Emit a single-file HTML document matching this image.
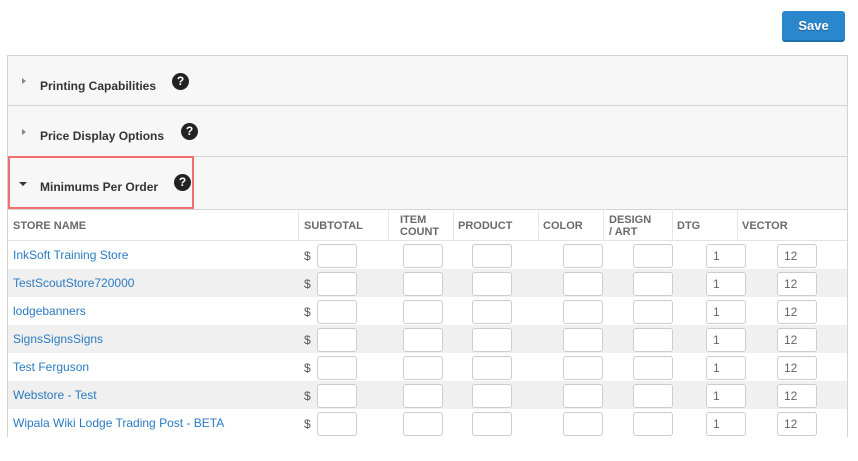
<!DOCTYPE html>
<html><head><style>
*{box-sizing:border-box;margin:0;padding:0}
body{width:858px;height:461px;background:#fff;font-family:"Liberation Sans",Arial,sans-serif;position:relative;overflow:hidden}
.abs{position:absolute}
.save{left:782px;top:11px;width:63px;height:31px;background:#2b87cc;border-radius:3px;border-bottom:2px solid #1f6faa;color:#fff;font-weight:bold;font-size:13px;text-align:center;line-height:30px;text-shadow:0 1px 1px rgba(0,0,0,.3)}
.panel{left:7px;top:55px;width:841px;height:154px;background:#f7f7f7;border:1px solid #d4d4d4;border-bottom:none}
.sec{position:absolute;left:0;width:100%;border-bottom:1px solid #d4d4d4}
.title{position:absolute;font-size:12px;font-weight:bold;color:#333}
.tri{position:absolute;width:0;height:0}
.q{position:absolute;width:17px;height:17px;border-radius:50%;background:#222;color:#fff;font-size:12px;font-weight:bold;text-align:center;line-height:17px}
.hl{left:8px;top:156px;width:186px;height:53px;border:2px solid #f07070}
.lb{left:7px;top:208px;width:1px;height:229px;background:#d4d4d4}
.rb{left:847px;top:208px;width:1px;height:229px;background:#d4d4d4}
.th{font-size:11px;font-weight:bold;color:#6a6a6a;line-height:12px}
.vl{top:209px;width:1px;height:32px;background:#e6e6e6}
.row{left:8px;width:839px;height:28px}
.row.s{background:#f0f0f0}
.link{font-size:12px;color:#2a7ac0;left:13px}
.in{position:absolute;width:40px;height:24px;background:#fff;border:1px solid #ccc;border-radius:3px;font-size:12px;color:#666;padding-left:6px;line-height:22px}
.dol{font-size:12px;color:#555}
</style></head><body>
<div class="abs save">Save</div>
<div class="abs panel">
 <div class="sec" style="top:0;height:50px"></div>
 <div class="sec" style="top:50px;height:51px"></div>
 <div class="sec" style="top:101px;height:53px;border-bottom:1px solid #d4d4d4"></div>
 <div class="tri" style="left:14px;top:22px;border-left:4px solid #888;border-top:3px solid transparent;border-bottom:3px solid transparent"></div>
 <div class="title" style="left:32px;top:23px">Printing Capabilities</div>
 <div class="q" style="left:164px;top:17px">?</div>
 <div class="tri" style="left:14px;top:73px;border-left:4px solid #888;border-top:3px solid transparent;border-bottom:3px solid transparent"></div>
 <div class="title" style="left:32px;top:73px">Price Display Options</div>
 <div class="q" style="left:173px;top:67px">?</div>
 <div class="tri" style="left:11px;top:126px;border-top:4px solid #333;border-left:4px solid transparent;border-right:4px solid transparent"></div>
 <div class="title" style="left:32px;top:124px">Minimums Per Order</div>
 <div class="q" style="left:166px;top:118px">?</div>
</div>
<div class="abs hl"></div>
<div class="abs lb"></div><div class="abs rb"></div>
<div class="abs" style="left:8px;top:240px;width:839px;height:1px;background:#e3e3e3"></div>
<div class="abs vl" style="left:298px"></div><div class="abs vl" style="left:388px"></div><div class="abs vl" style="left:453px"></div><div class="abs vl" style="left:538px"></div><div class="abs vl" style="left:603px"></div><div class="abs vl" style="left:672px"></div><div class="abs vl" style="left:737px"></div>
<div class="abs th" style="left:13px;top:220px">STORE NAME</div>
<div class="abs th" style="left:304px;top:220px">SUBTOTAL</div>
<div class="abs th" style="left:400px;top:214px">ITEM<br>COUNT</div>
<div class="abs th" style="left:458px;top:220px">PRODUCT</div>
<div class="abs th" style="left:543px;top:220px">COLOR</div>
<div class="abs th" style="left:609px;top:214px">DESIGN<br>/ ART</div>
<div class="abs th" style="left:677px;top:220px">DTG</div>
<div class="abs th" style="left:742px;top:220px">VECTOR</div>
<div id="rows"></div>
<script>
var names=["InkSoft Training Store","TestScoutStore720000","lodgebanners","SignsSignsSigns","Test Ferguson","Webstore - Test","Wipala Wiki Lodge Trading Post - BETA"];
var h="";
names.forEach(function(n,i){var y=241+i*28;
h+='<div class="abs row'+(i%2?' s':'')+'" style="top:'+y+'px"></div>';
h+='<div class="abs link" style="top:'+(y+7)+'px">'+n+'</div>';
h+='<div class="abs dol" style="left:304px;top:'+(y+8)+'px">$</div>';
[317,403,472,563,633].forEach(function(x){h+='<div class="in" style="left:'+x+'px;top:'+(y+3)+'px"></div>';});
h+='<div class="in" style="left:706px;top:'+(y+3)+'px">1</div>';
h+='<div class="in" style="left:777px;top:'+(y+3)+'px">12</div>';
});
document.getElementById("rows").innerHTML=h;
</script>
</body></html>
